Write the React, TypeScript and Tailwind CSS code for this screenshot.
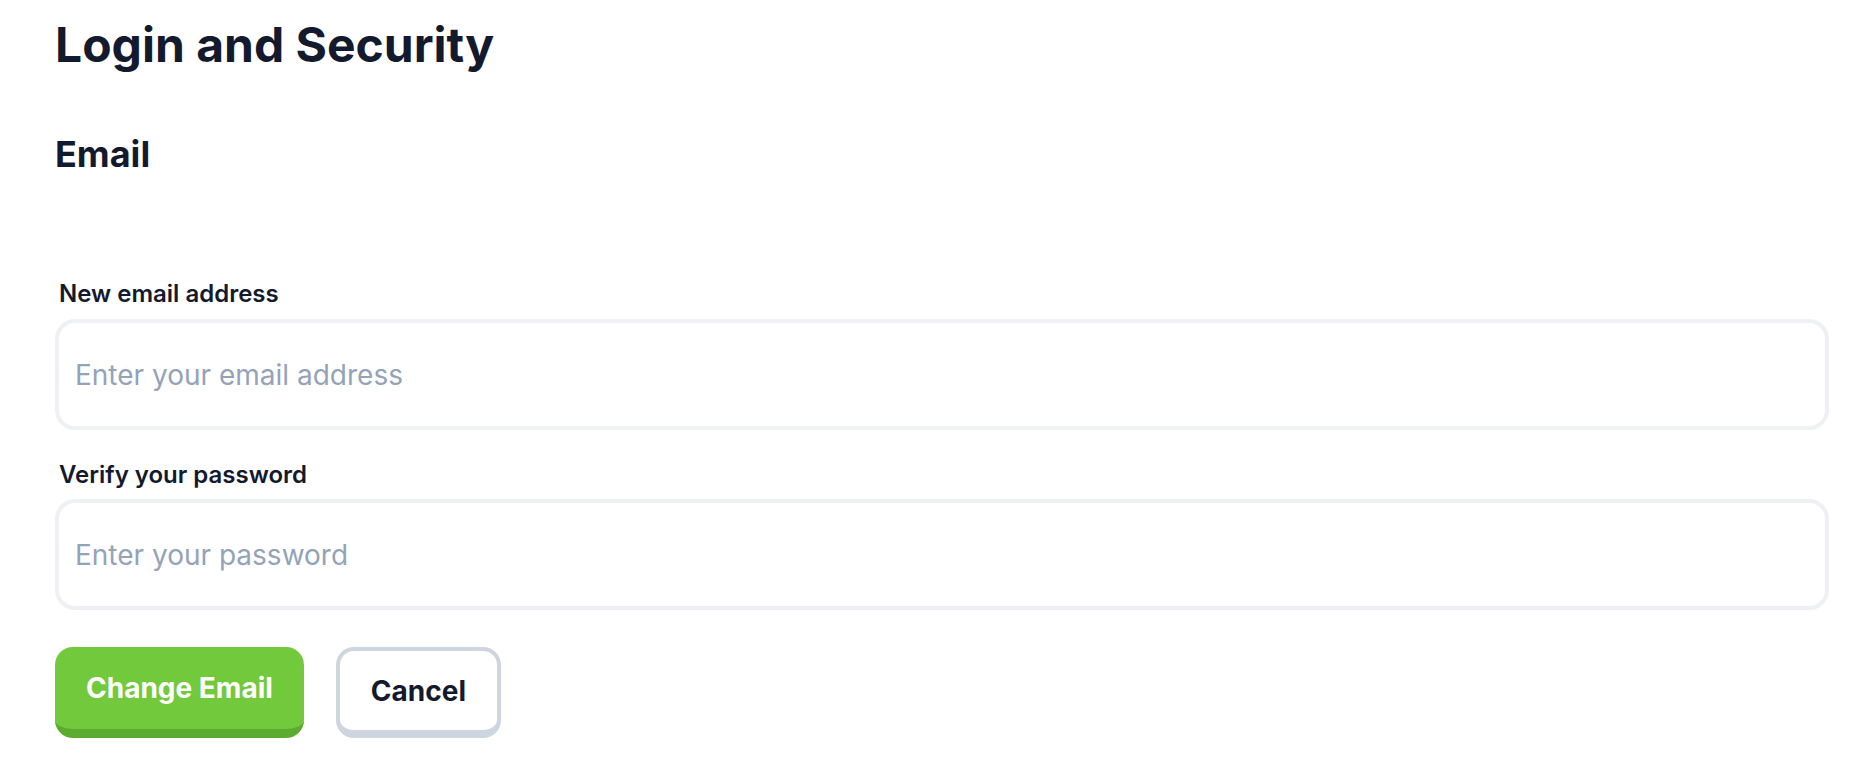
import { useState } from "react";

export default function App() {
  const [email, setEmail] = useState("");
  const [password, setPassword] = useState("");

  return (
    <main className="min-h-screen bg-white font-['Inter','Noto_Sans',sans-serif] text-[#141a2e]">
      <div className="pl-[55px] pr-[41px] pt-4">
        {/* Header */}
        <h1 className="text-[48px] leading-[58px] font-bold">Login and Security</h1>
        <h2 className="mt-[58px] text-[36px] leading-[44px] font-bold">Email</h2>

        {/* Form */}
        <form className="mt-[102px]" onSubmit={(e) => e.preventDefault()}>
          <label className="block pl-1 text-[24px] leading-[32px] font-semibold mb-[9px]">New email address</label>
          <input
            type="email"
            value={email}
            onChange={(e) => setEmail(e.target.value)}
            placeholder="Enter your email address"
            className="block w-full h-[111px] px-4 rounded-[20px] border-4 border-[#eef0f4] bg-white text-[28px] text-[#141a2e] placeholder:text-[#94a3b8] outline-none"
          />

          <label className="block pl-1 mt-[29px] text-[24px] leading-[32px] font-semibold mb-2">Verify your password</label>
          <input
            type="password"
            value={password}
            onChange={(e) => setPassword(e.target.value)}
            placeholder="Enter your password"
            className="block w-full h-[111px] px-4 rounded-[20px] border-4 border-[#eef0f4] bg-white text-[28px] text-[#141a2e] placeholder:text-[#94a3b8] outline-none"
          />

          <div className="flex items-start gap-8 mt-[37px]">
            <button
              type="submit"
              className="h-[91px] px-[31px] rounded-[18px] bg-[#72c93c] border-b-[9px] border-[#5aab2e] text-white text-[28px] font-bold"
            >
              Change Email
            </button>
            <button
              type="button"
              className="h-[91px] px-[31px] rounded-[18px] bg-white border-4 border-b-8 border-[#cdd5e0] text-[#141a2e] text-[28px] font-bold"
            >
              Cancel
            </button>
          </div>
        </form>
      </div>
    </main>
  );
}
